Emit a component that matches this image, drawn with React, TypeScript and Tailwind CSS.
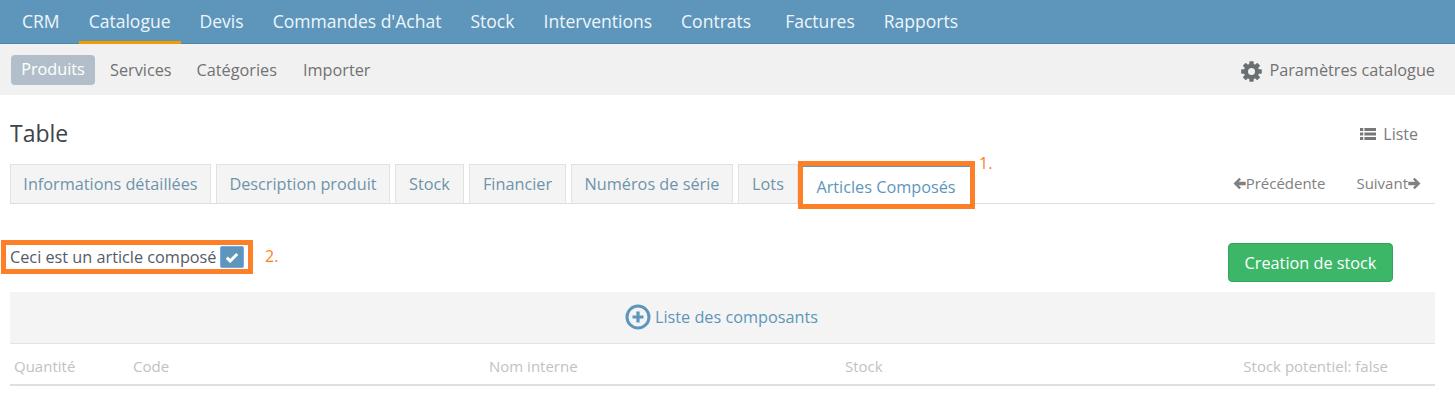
import React from "react";

const top = [
  { t: "CRM" },
  { t: "Catalogue", active: true },
  { t: "Devis" },
  { t: "Commandes d'Achat" },
  { t: "Stock" },
  { t: "Interventions" },
  { t: "Contrats", extra: true },
  { t: "Factures" },
  { t: "Rapports" },
];
const tabs = [
  { t: "Informations détaillées", w: "w-[201px]" },
  { t: "Description produit", w: "w-[174px]" },
  { t: "Stock", w: "w-[69px]" },
  { t: "Financier", w: "w-[97px]" },
  { t: "Numéros de série", w: "w-[162px]" },
  { t: "Lots", w: "w-[60px]" },
];

function Gear() {
  return (
    <svg width="21" height="21" viewBox="0 0 21 21" aria-hidden="true" className="mt-[2px]">
      <circle cx="10.5" cy="10.5" r="5.6" fill="none" stroke="#6a6f73" strokeWidth="4.2" />
      {[0, 45, 90, 135, 180, 225, 270, 315].map((a) => (
        <rect key={a} x="8.3" y="0.2" width="4.4" height="4.6" rx="0.8" fill="#6a6f73" transform={`rotate(${a} 10.5 10.5)`} />
      ))}
    </svg>
  );
}

function ListIcon() {
  return (
    <svg width="16" height="12" viewBox="0 0 16 12" aria-hidden="true" fill="#777">
      <rect x="0" y="0" width="3.2" height="3" />
      <rect x="4.4" y="0" width="11.6" height="3" />
      <rect x="0" y="4.5" width="3.2" height="3" />
      <rect x="4.4" y="4.5" width="11.6" height="3" />
      <rect x="0" y="9" width="3.2" height="3" />
      <rect x="4.4" y="9" width="11.6" height="3" />
    </svg>
  );
}

function Arrow({ flip }: { flip?: boolean }) {
  return (
    <svg width="13" height="13" viewBox="0 0 13 13" aria-hidden="true" className={flip ? "rotate-180" : ""}>
      <path d="M0.5 6.5 6.3 0.8 8 2.5 5.7 4.8H12.7V8.2H5.7L8 10.5 6.3 12.2Z" fill="#808080" />
    </svg>
  );
}

export default function App() {
  return (
    <div className="w-[1455px] h-[412px] bg-white overflow-hidden font-['Open_Sans',sans-serif] text-[16.25px] text-[#727272]">
      <nav className="h-[44px] bg-[#5e96bb] border-b border-[#4f87ac] flex pl-[12px] gap-[9px]">
        {top.map((i) => (
          <a key={i.t} className={`px-[10px] h-[44px] flex items-center justify-center text-[17.55px] text-[#eef5fa] whitespace-nowrap ${i.active ? "border-b-[3px] border-[#f59b00] pt-[1px]" : "pb-[2px]"} ${i.extra ? "mr-[5px]" : ""}`}>{i.t}</a>
        ))}
      </nav>
      <div className="h-[51px] bg-[#f1f1f1] flex items-center pl-[11px] pr-[20px]">
        <span className="w-[84px] h-[30px] rounded-[4px] bg-[#b2bfca] text-white flex items-center justify-center">Produits</span>
        <span className="ml-[15px] pt-[1px]">Services</span>
        <span className="ml-[25px] pt-[1px]">Catégories</span>
        <span className="ml-[26px] pt-[1px]">Importer</span>
        <span className="ml-auto flex items-center gap-[7px] pt-[1px]"><Gear />Paramètres catalogue</span>
      </div>
      <main className="pl-[10px] pr-[20px] relative">
        <div className="h-[69px] flex items-start justify-between">
          <h1 className="mt-[22px] text-[23px] leading-[32px] text-[#3e4347]">Table</h1>
          <span className="mt-[27px] mr-[17px] flex items-center gap-[7px] text-[16px] text-[#7c7c7c]"><ListIcon />Liste</span>
        </div>
        <div className="h-[40px] flex items-stretch border-b border-[#dedede] gap-[5px] text-[#6f93aa]">
          {tabs.map((t) => (
            <span key={t.t} className={`${t.w} flex items-center justify-center bg-[#f4f4f4] border border-b-0 border-[#e2e2e2] whitespace-nowrap`}>{t.t}</span>
          ))}
          <span className="w-[167px] mt-[1px] -mb-[1px] bg-white border-t-[2px] border-[#5e96bb] flex items-center justify-center text-[#5e96bb] whitespace-nowrap pt-[3px] pr-[1px]">Articles Composés</span>
          <span className="ml-auto flex items-center text-[15px] text-[#808080] mr-[26px]"><Arrow />Précédente</span>
          <span className="flex items-center text-[15px] text-[#808080] mr-[14px]">Suivant<Arrow flip /></span>
        </div>
        <div className="h-[88px] relative">
          <div className="absolute left-0 top-[41px] flex items-center gap-[3px] text-[#555b66]">
            <span className="whitespace-nowrap">Ceci est un article composé</span>
            <span className="w-[24px] h-[22px] bg-[#5e96bb] border border-[#76a9f0] rounded-[2px] flex items-center justify-center">
              <svg width="14" height="11" viewBox="0 0 14 11" aria-hidden="true">
                <path d="M1.8 5.6 5.2 9 12.2 2" fill="none" stroke="#fff" strokeWidth="3" />
              </svg>
            </span>
          </div>
          <button className="absolute right-[42px] top-[39px] w-[165px] h-[39px] rounded-[4px] bg-[#3cb768] border border-[#35a35c] text-white pt-[1px]">Creation de stock</button>
        </div>
        <div className="h-[52px] bg-[#f4f4f4] border-b border-[#e3e3e3] flex items-center justify-center gap-[4px] text-[#5e96bb] pb-[1px] pr-[2px]">
          <svg width="26" height="26" viewBox="0 0 26 26" aria-hidden="true">
            <circle cx="13" cy="13" r="11" fill="none" stroke="#5e96bb" strokeWidth="3" />
            <path d="M13 7.5v11M7.5 13h11" stroke="#5e96bb" strokeWidth="3.2" />
          </svg>
          <span>Liste des composants</span>
        </div>
        <div className="h-[42px] border-b-2 border-[#dfdfe2] grid grid-cols-[119px_356px_356px_1fr_auto] items-center text-[15px] text-[#c2c2c2] pl-[4px] pr-[47px] pt-[5px]">
          <span>Quantité</span>
          <span>Code</span>
          <span>Nom interne</span>
          <span>Stock</span>
          <span>Stock potentiel: false</span>
        </div>
        {/* annotations */}
        <div className="absolute left-[798px] top-[66px] w-[177px] h-[48px] border-[5px] border-[#fd7f28]" />
        <span className="absolute left-[979px] top-[56px] text-[16px] text-[#fd7f28]">1.</span>
        <div className="absolute left-[1px] top-[145px] w-[252px] h-[34px] border-[5px] border-[#fd7f28]" />
        <span className="absolute left-[265px] top-[149px] text-[16px] text-[#fd7f28]">2.</span>
      </main>
    </div>
  );
}
